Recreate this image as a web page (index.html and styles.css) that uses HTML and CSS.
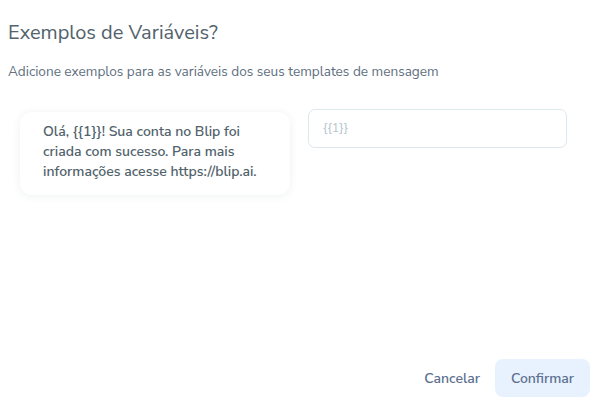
FILE: index.html
```html
<!DOCTYPE html>
<html lang="pt-BR">
<head>
  <meta charset="UTF-8">
  <meta name="viewport" content="width=device-width, initial-scale=1.0">
  <title>Exemplos de Variáveis</title>
  <link rel="stylesheet" href="styles.css">
</head>
<body>
<div class="modal">
  <!-- Header -->
  <div class="modal-header">
    <h2 class="modal-title">Exemplos de Variáveis?</h2>
    <p class="modal-subtitle">Adicione exemplos para as variáveis dos seus templates de mensagem</p>
  </div>

  <!-- Content -->
  <div class="modal-body">
    <div class="message-card">
      <p>Olá, {{1}}! Sua conta no Blip foi criada com sucesso. Para mais informações acesse https://blip.ai.</p>
    </div>
    <div class="variable-field">
      <input type="text" placeholder="{{1}}">
    </div>
  </div>

  <!-- Footer -->
  <div class="modal-footer">
    <button class="btn btn-ghost">Cancelar</button>
    <button class="btn btn-secondary">Confirmar</button>
  </div>
</div>
</body>
</html>
```

FILE: styles.css
```css
* {
  margin: 0;
  padding: 0;
  box-sizing: border-box;
}

body {
  font-family: 'Nunito Sans', 'Open Sans', sans-serif;
  background-color: #fff;
  color: #52636c;
  width: 608px;
  height: 405px;
  overflow: hidden;
}

/* Container */
.modal {
  display: flex;
  flex-direction: column;
  height: 100%;
  padding: 0 18px 8px 8px;
}

/* Header */
.modal-header {
  padding-top: 20px;
}

.modal-title {
  font-size: 20px;
  font-weight: 400;
  line-height: 26px;
  color: #52636c;
}

.modal-subtitle {
  margin-top: 17px;
  font-size: 13.6px;
  line-height: 18px;
  color: #607080;
}

/* Content */
.modal-body {
  flex-grow: 1;
  display: flex;
  align-items: flex-start;
  padding-top: 28px;
  padding-left: 12px;
}

.message-card {
  width: 270px;
  margin-top: 3px;
  padding: 10px 20px 13px 23px;
  border-radius: 12px;
  background-color: #fff;
  box-shadow: 0 1px 8px rgba(40, 60, 80, 0.08);
}

.message-card p {
  font-size: 14px;
  font-weight: 600;
  line-height: 20px;
  color: #52636c;
}

.variable-field {
  margin-left: 18px;
  width: 259px;
}

.variable-field input {
  width: 100%;
  height: 39px;
  padding: 0 14px 2px;
  border: 1px solid #dde7ee;
  border-radius: 7px;
  font-family: inherit;
  font-size: 12.5px;
  color: #52636c;
  outline: none;
}

.variable-field input::placeholder {
  color: #b4c4ce;
}

/* Footer */
.modal-footer {
  display: flex;
  justify-content: flex-end;
  align-items: center;
  gap: 15px;
}

.btn {
  font-family: inherit;
  font-size: 14px;
  font-weight: 600;
  border: none;
  cursor: pointer;
  color: #5d7090;
  height: 38px;
  border-radius: 8px;
}

.btn-ghost {
  background: transparent;
  padding: 0;
}

.btn-secondary {
  width: 95px;
  background-color: #e8f2ff;
}
```
